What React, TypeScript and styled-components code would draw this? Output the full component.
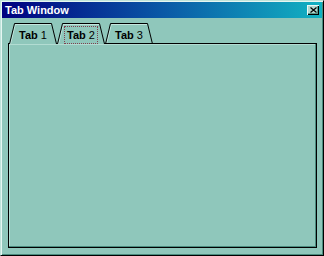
import React from "react";
import styled, { createGlobalStyle } from "styled-components";

const Global = createGlobalStyle`
  html, body { margin: 0; padding: 0; background: #8fc7bb; }
  body { font-family: "Liberation Sans", Arial, sans-serif; }
`;

const Window = styled.div`
  width: 324px;
  height: 256px;
  box-sizing: border-box;
  background: #8fc7bb;
  border: 1px solid;
  border-color: #bfe3da #000 #000 #bfe3da;
  box-shadow: inset 1px 1px #e6f6f2, inset -1px -1px #4a8c7e;
  padding: 1px;
  display: flex;
  flex-direction: column;
`;

const TitleBar = styled.div`
  height: 16px;
  flex: none;
  display: flex;
  align-items: center;
  justify-content: space-between;
  padding: 0 3px 0 3px;
  background: linear-gradient(90deg, #000080 0%, #0a58a6 50%, #12b2c2 100%);
`;

const Title = styled.span`
  color: #fff;
  font-size: 11px;
  font-weight: bold;
  line-height: 16px;
`;

const CloseButton = styled.button`
  width: 12px;
  height: 10px;
  padding: 0;
  margin: 0;
  box-sizing: border-box;
  background: #b4d8d0;
  border: none;
  box-shadow: inset 1px 1px #eaf8f4, inset -1px -1px #000, inset -2px -2px #5a9a8c;
  display: flex;
  align-items: center;
  justify-content: center;
`;

const Body = styled.div`
  flex: 1;
  display: flex;
  flex-direction: column;
  padding: 5px 5px 6px 6px;
`;

const TabRow = styled.div`
  display: flex;
  height: 21px;
  margin: 0 0 -1px 1px;
  position: relative;
  z-index: 1;
`;

const Tab = styled.div`
  position: relative;
  width: 48px;
  height: 21px;
  display: flex;
  justify-content: center;
  padding-top: 4px;
  box-sizing: border-box;
  font-size: 11px;
  color: #000;
`;

const TabShape = styled.svg`
  position: absolute;
  left: 0;
  top: 0;
  width: 48px;
  height: 21px;
`;

const TabLabel = styled.span<{ $focused?: boolean }>`
  position: relative;
  line-height: 14px;
  height: 16px;
  padding: 1px 2px 0;
  box-sizing: border-box;
  outline: ${(p) => (p.$focused ? "1px dotted #804050" : "none")};
  outline-offset: 0;
  white-space: pre;
`;

const Strong = styled.b`
  font-weight: bold;
`;

const Panel = styled.div`
  flex: 1;
  border: 1px solid #000;
  box-shadow: inset -1px -1px #4a8c7e, inset 1px 1px #b2dcd2;
`;

const tabs = [
  { n: "1", open: true, focused: false },
  { n: "2", open: true, focused: true },
  { n: "3", open: false, focused: false },
];

export default function App() {
  return (
    <>
      <Global />
      <Window>
        <TitleBar>
          <Title>Tab Window</Title>
          <CloseButton aria-label="Close">
            <svg width="7" height="6" viewBox="0 0 7 6">
              <path d="M0.5 0.5 L6.5 5.5 M6.5 0.5 L0.5 5.5" stroke="#000" strokeWidth="1.2" />
            </svg>
          </CloseButton>
        </TitleBar>
        <Body>
          <TabRow>
            {tabs.map((t) => (
              <Tab key={t.n}>
                <TabShape viewBox="0 0 48 21">
                  <polygon points="0.5,21 5.5,0.5 42.5,0.5 47.5,21" fill="#8fc7bb" />
                  <polyline
                    points="1.5,21 6.3,1.5 42,1.5"
                    fill="none"
                    stroke="#c4e6de"
                    strokeWidth="1"
                  />
                  <polyline
                    points="0.5,21 5.5,0.5 42.5,0.5 47.5,21"
                    fill="none"
                    stroke="#000"
                    strokeWidth="1"
                  />
                  {!t.open && (
                    <line x1="0" y1="20.5" x2="48" y2="20.5" stroke="#000" strokeWidth="1" />
                  )}
                </TabShape>
                <TabLabel $focused={t.focused}>
                  <Strong>Tab</Strong> {t.n}
                </TabLabel>
              </Tab>
            ))}
          </TabRow>
          <Panel />
        </Body>
      </Window>
    </>
  );
}
